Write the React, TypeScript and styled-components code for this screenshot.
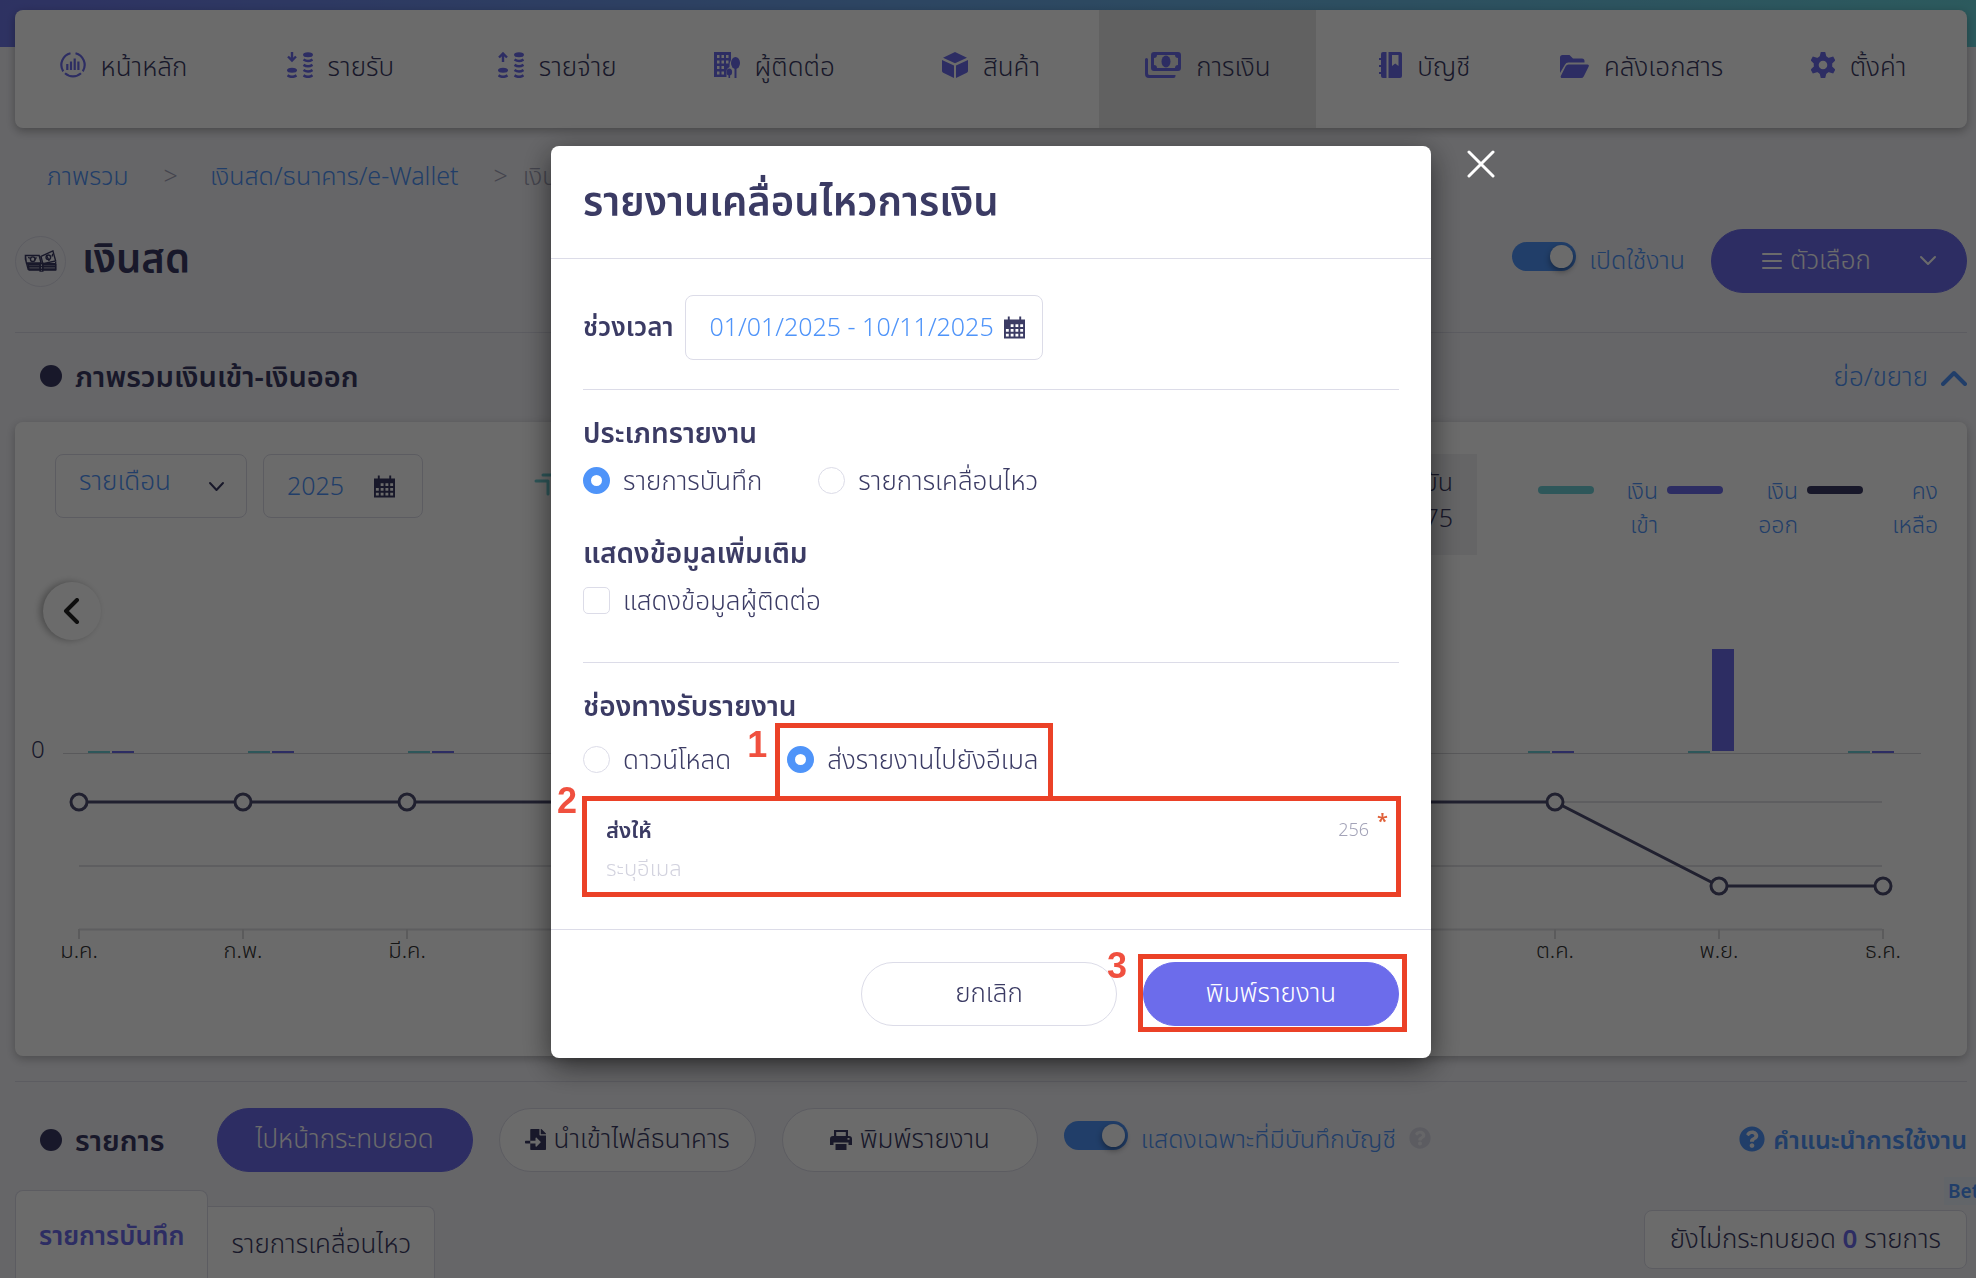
import React from 'react';
import styled, { createGlobalStyle } from 'styled-components';
import { FaFileImport, FaQuestionCircle } from 'react-icons/fa';

const color = {
  ink: '#3b3b64',
  purple: '#6c6ceb',
  blue: '#4f94f9',
  teal: '#6ed0d6',
  line: '#dcdce8',
  page: '#f3f3f8',
  mute: '#a3a3b8',
  mark: '#eb4127',
};

const GlobalStyle = createGlobalStyle`
  * { box-sizing: border-box; }
  body { margin: 0; background: ${color.page}; }
  body, button, input, select {
    font-family: "Noto Sans", "Noto Sans Thai", "Noto Sans Thai UI", sans-serif;
    font-size: 25px;
    font-weight: 350;
    line-height: 40px;
    color: ${color.ink};
  }
  a { text-decoration: none; color: ${color.blue}; }
  h1, h2, h3 { margin: 0; font-weight: 600; }
  svg { display: block; flex: none; }
`;

const Page = styled.div`
  height: 100vh;
  overflow: hidden;
  background: linear-gradient(90deg, #6f78ea, #6ca6ea 45%, #6ad6de) top / 100% 47px no-repeat ${color.page};
  padding: 10px 9px 0 15px;
`;

const Nav = styled.nav`
  display: grid;
  grid-template-columns: repeat(9, 1fr);
  height: 118px;
  background: #fff;
  border-radius: 8px;
  box-shadow: 0 3px 10px rgba(0, 0, 0, 0.3);
`;

const NavLink = styled.a<{ $active?: boolean }>`
  display: flex;
  justify-content: center;
  align-items: flex-start;
  gap: 15px;
  padding-top: 36px;
  font-size: 26px;
  color: ${color.ink};
  background: ${(p) => (p.$active ? '#e7e7e7' : 'transparent')};
  svg { color: ${color.purple}; margin-top: 6px; }
`;

const Crumbs = styled.nav`
  display: flex;
  align-items: center;
  height: 40px;
  margin-top: 27px;
  padding-left: 32px;
  color: ${color.mute};
`;

const CrumbMark = styled.span<{ $tight?: boolean }>`
  padding: 0 ${(p) => (p.$tight ? '15px' : '32px')} 0 35px;
`;

const TitleRow = styled.header`
  display: flex;
  align-items: center;
  height: 64px;
  margin-top: 34px;
`;

const CashBadge = styled.span`
  display: grid;
  place-items: center;
  width: 51px;
  height: 51px;
  border: 1px solid ${color.line};
  border-radius: 50%;
`;

const PageTitle = styled.h1`
  flex: 1;
  margin-left: 16px;
  padding-bottom: 6px;
  font-size: 40px;
  line-height: 56px;
`;

const SwitchLabel = styled.label`
  display: flex;
  align-items: center;
  gap: 13px;
  padding-bottom: 5px;
  color: ${color.blue};
`;

const Switch = styled.input`
  appearance: none;
  width: 64px;
  height: 29px;
  margin: 0 0 5px;
  padding: 3px;
  border-radius: 15px;
  background: ${color.blue};
  &::before {
    content: '';
    display: block;
    width: 23px;
    height: 23px;
    margin-left: auto;
    border-radius: 50%;
    background: #fff;
    box-shadow: 0 3px 6px rgba(0, 0, 0, 0.4);
  }
`;

const Pill = styled.button<{ $solid?: boolean }>`
  display: flex;
  align-items: center;
  justify-content: center;
  gap: 8px;
  min-width: 256px;
  height: 64px;
  padding: 0 25px 5px;
  border: 1px solid ${(p) => (p.$solid ? color.purple : color.line)};
  border-radius: 32px;
  background: ${(p) => (p.$solid ? color.purple : '#fff')};
  color: ${(p) => (p.$solid ? '#fff' : color.ink)};
  font-size: 26px;
  white-space: nowrap;
  svg { margin-top: 4px; }
`;

const OptionsPill = styled(Pill)`
  margin-left: 26px;
  padding-left: 46px;
  svg:last-child { margin-left: 40px; }
`;

const Rule = styled.hr<{ $top?: number }>`
  height: 1px;
  margin: ${(p) => p.$top ?? 0}px 0 0;
  border: 0;
  background: ${color.line};
`;

const SectionHead = styled.div`
  display: flex;
  align-items: center;
  justify-content: space-between;
  height: 89px;
  padding: 0 0 4px 25px;
`;

const SectionTitle = styled.h2`
  display: flex;
  align-items: center;
  gap: 13px;
  font-size: 29px;
  line-height: 40px;
  white-space: nowrap;
  &::before {
    content: '';
    width: 22px;
    height: 22px;
    border-radius: 50%;
    background: ${color.ink};
  }
`;

const Collapse = styled.a`
  display: flex;
  align-items: center;
  gap: 13px;
  font-size: 26px;
  svg { margin-top: 4px; }
`;

const ChartCard = styled.section`
  height: 634px;
  padding-top: 32px;
  border-radius: 8px;
  background: #fff;
  box-shadow: 0 3px 10px rgba(0, 0, 0, 0.25);
`;

const Toolbar = styled.div`
  display: flex;
  align-items: flex-start;
  height: 101px;
  padding: 0 29px 0 40px;
`;

const Box = styled.label<{ $w: number; $end: number }>`
  display: flex;
  align-items: center;
  flex: none;
  width: ${(p) => p.$w}px;
  height: 64px;
  padding: 0 ${(p) => p.$end}px 0 23px;
  margin-right: 16px;
  border: 1px solid ${color.line};
  border-radius: 8px;
  background: #fff;
`;

const PlainSelect = styled.select`
  appearance: none;
  flex: 1;
  min-width: 0;
  padding: 0 0 12px;
  border: 0;
  background: transparent;
  color: ${color.blue};
  font-size: 26px;
`;

const PlainInput = styled.input`
  flex: 1;
  min-width: 0;
  padding: 0 0 3px;
  border: 0;
  outline: 0;
  background: transparent;
  color: ${color.blue};
  &::placeholder { color: #d3d3df; opacity: 1; }
`;

const Summary = styled.div`
  flex: 1;
  display: flex;
  justify-content: space-between;
  padding: 0 61px 0 95px;
  svg { margin-top: 18px; }
`;

const Balance = styled.div`
  width: 300px;
  height: 101px;
  padding: 9px 24px;
  background: #f0f0f3;
  text-align: right;
  line-height: 36px;
`;

const Legend = styled.ul`
  display: grid;
  grid-template-columns: 120px 131px 131px;
  gap: 9px;
  margin: 0;
  padding: 19px 0 0;
  list-style: none;
`;

const LegendItem = styled.li<{ $c: string }>`
  display: flex;
  justify-content: space-between;
  text-align: right;
  font-size: 23px;
  line-height: 34px;
  color: ${color.blue};
  &::before {
    content: '';
    width: 56px;
    height: 8px;
    margin-top: 13px;
    border-radius: 4px;
    background: ${(p) => p.$c};
  }
`;

const ChartArea = styled.div`
  position: relative;
  > svg { width: 100%; height: auto; }
`;

const PrevButton = styled.button`
  position: absolute;
  left: 28px;
  top: 27px;
  display: grid;
  place-items: center;
  width: 58px;
  height: 58px;
  padding: 0 2px 0 0;
  border: 0;
  border-radius: 50%;
  background: #fff;
  box-shadow: -3px 0 7px rgba(0, 0, 0, 0.3);
`;

const ListHead = styled.div`
  display: flex;
  align-items: center;
  height: 64px;
  margin-top: 26px;
  padding-left: 25px;
`;

const ListActions = styled.div`
  display: flex;
  align-items: center;
  gap: 26px;
  margin-left: 52px;
  flex: 1;
`;

const HelpLink = styled.a`
  display: flex;
  align-items: center;
  gap: 8px;
  padding-bottom: 2px;
  font-weight: 600;
`;

const TabsRow = styled.div`
  display: flex;
  align-items: flex-end;
  margin-top: 18px;
  height: 88px;
`;

const Tab = styled.button<{ $active?: boolean }>`
  height: ${(p) => (p.$active ? 88 : 72)}px;
  padding: 0 23px;
  border: 1px solid ${color.line};
  border-bottom: 0;
  border-left-width: ${(p) => (p.$active ? 1 : 0)}px;
  border-radius: ${(p) => (p.$active ? '8px 8px 0 0' : '0 8px 0 0')};
  background: #fff;
  font-size: 26px;
  font-weight: ${(p) => (p.$active ? 600 : 350)};
  color: ${(p) => (p.$active ? color.purple : color.ink)};
`;

const Pending = styled.div`
  position: relative;
  align-self: flex-start;
  margin: 20px 0 0 auto;
  height: 59px;
  padding: 7px 25px;
  border: 1px solid ${color.line};
  border-radius: 8px;
  background: #fff;
  font-size: 26px;
  b { color: ${color.purple}; font-weight: 600; }
`;

const Beta = styled.span`
  position: absolute;
  left: calc(100% - 22px);
  top: -34px;
  padding: 0 4px;
  font-size: 19px;
  line-height: 28px;
  font-weight: 600;
  color: ${color.blue};
  background: #e9f1fb;
`;

/* Modal */

const Backdrop = styled.div`
  position: fixed;
  inset: 0;
  display: flex;
  justify-content: center;
  align-items: flex-start;
  padding: 146px 10px 0 16px;
  background: rgba(0, 0, 0, 0.58);
`;

const Modal = styled.section`
  position: relative;
  width: 880px;
  border-radius: 8px;
  background: #fff;
  box-shadow: 0 8px 30px rgba(0, 0, 0, 0.55);
`;

const Close = styled.button`
  position: absolute;
  left: calc(100% + 36px);
  top: 4px;
  padding: 0;
  border: 0;
  background: none;
  color: #fff;
`;

const ModalHead = styled.header`
  padding: 27px 32px 29px;
  border-bottom: 1px solid ${color.line};
`;

const ModalTitle = styled.h2`
  font-size: 40px;
  line-height: 56px;
`;

const ModalBody = styled.form`
  padding: 36px 32px 33px;
`;

const Period = styled.div`
  display: flex;
  align-items: center;
  gap: 11px;
  margin-bottom: 29px;
  > label {
    padding-bottom: 3px;
    font-size: 26px;
    font-weight: 600;
    white-space: nowrap;
  }
`;

const DateBox = styled.div`
  display: flex;
  align-items: center;
  width: 358px;
  height: 65px;
  padding: 0 17px 0 24px;
  border: 1px solid ${color.line};
  border-radius: 8px;
`;

const Group = styled.div<{ $top: number; $gap: number }>`
  display: flex;
  flex-direction: column;
  gap: ${(p) => p.$gap}px;
  padding-top: ${(p) => p.$top}px;
`;

const GroupTitle = styled.h3`
  font-size: 28px;
  line-height: 40px;
`;

const Choices = styled.div`
  display: flex;
  gap: 56px;
`;

const Choice = styled.label`
  position: relative;
  display: flex;
  align-items: center;
  gap: 13px;
  font-size: 26px;
  white-space: nowrap;
`;

const Radio = styled.input`
  appearance: none;
  width: 27px;
  height: 27px;
  margin: 0;
  border: 1px solid ${color.line};
  border-radius: 50%;
  background: #fff;
  &:checked { border: 8px solid ${color.blue}; }
`;

const Check = styled(Radio)`
  border-radius: 5px;
`;

const Field = styled.div`
  position: relative;
  height: 99px;
  margin-top: 18px;
  padding: 14px 23px 0;
`;

const FieldTop = styled.div`
  display: flex;
  justify-content: space-between;
  line-height: 36px;
  label { font-size: 22px; font-weight: 600; }
  span { font-size: 18px; color: ${color.mute}; padding-right: 7px; }
`;

const Star = styled.i`
  position: absolute;
  right: 11px;
  top: 10px;
  font-size: 20px;
  line-height: 28px;
  font-style: normal;
  font-weight: 600;
  color: #e0613a;
`;

const EmailInput = styled(PlainInput)`
  display: block;
  width: 100%;
  font-size: 22px;
`;

const ModalFoot = styled.footer`
  display: flex;
  justify-content: flex-end;
  gap: 26px;
  padding: 32px;
  border-top: 1px solid ${color.line};
`;

const Anchor = styled.div`
  position: relative;
`;

const Frame = styled.span<{ $inset: string }>`
  position: absolute;
  inset: ${(p) => p.$inset};
  border: 5px solid ${color.mark};
  pointer-events: none;
`;

const Step = styled.span<{ $x: number; $y: number }>`
  position: absolute;
  left: ${(p) => p.$x}px;
  top: ${(p) => p.$y}px;
  font-family: "Liberation Sans", Arial, sans-serif;
  font-size: 36px;
  line-height: 40px;
  font-weight: 700;
  color: #f0503f;
`;

/* Icons */

const HomeIcon = () => (
  <svg width="26" height="26" viewBox="0 0 26 26" fill="none" stroke="currentColor" strokeWidth="2.2">
    <path d="M10.500 1.300A12 12 0 0 0 3.200 19.300M15.500 1.300a12 12 0 0 1 7.300 18M5 21.300a12 12 0 0 0 16 0" />
    <path d="M7.300 18v-6M11 18V9.500M14.700 18V6.500M18.400 18V9.500" />
  </svg>
);

const CoinsIcon = ({ up }: { up?: boolean }) => (
  <svg width="26" height="26" viewBox="0 0 26 26" fill="none" stroke="currentColor">
    <path strokeWidth="2.400" d={up ? 'M5 10V2M1 5.500l4-4 4 4' : 'M5 0v8M1 4.500l4 4 4-4'} />
    <g fill="currentColor" stroke="none">
      <ellipse cx="21" cy="2.800" rx="5" ry="2.500" />
      <ellipse cx="5" cy="18.300" rx="5" ry="2.500" />
    </g>
    <path
      strokeWidth="2.600"
      d="M16.500 7.500q4.500 3 9 0M16.500 12.800q4.500 3 9 0M16.500 18q4.500 3 9 0M16.500 23.300q4.500 3 9 0M.5 23.300q4.500 3 9 0"
    />
  </svg>
);

const ContactIcon = () => (
  <svg width="26" height="26" viewBox="0 0 26 26" fill="currentColor">
    <path
      fillRule="evenodd"
      d="M0 0h17v8q-2 3-1.500 7-4 2-3 7v3H0zM3 3v3h2.500V3zm4.500 0v3H10V3zM12 3v3h2.500V3zM3 8.500v3h2.500v-3zm4.500 0v3H10v-3zm4.500 0v3h2.500v-3zM3 14v3h2.500v-3zm4.500 0v3H10v-3zM3 19.500v3h2.500v-3zm4.500 0v3H10v-3z"
    />
    <ellipse cx="21.500" cy="11" rx="4.500" ry="6" />
    <path d="M20.500 15h2v11h-2zM14.500 21h1.600v5h-1.600z" />
    <ellipse cx="15.300" cy="20" rx="2.800" ry="3.500" />
  </svg>
);

const CubeIcon = () => (
  <svg width="26" height="26" viewBox="0 0 26 26" fill="currentColor">
    <path d="M13 0l12 5.800-12 5.400L1 5.800zM0 8l12 5.400V26L1.200 20.800A2 2 0 0 1 0 19zM26 8l-12 5.400V26l10.800-5.200A2 2 0 0 0 26 19z" />
  </svg>
);

const MoneyIcon = () => (
  <svg width="36" height="26" viewBox="0 0 36 26" fill="currentColor">
    <path
      fillRule="evenodd"
      d="M9 0h24a3 3 0 0 1 3 3v13a3 3 0 0 1-3 3H9a3 3 0 0 1-3-3V3a3 3 0 0 1 3-3zm3 3a3 3 0 0 1-3 3v7a3 3 0 0 1 3 3h18a3 3 0 0 1 3-3V6a3 3 0 0 1-3-3z"
    />
    <ellipse cx="21" cy="9.500" rx="4.500" ry="6" />
    <path d="M1.500 6a1.500 1.500 0 0 1 1.500 1.500V21a1.800 1.800 0 0 0 2 2h25.500v1a2 2 0 0 1-2 2H4a4 4 0 0 1-4-4V7.500A1.500 1.500 0 0 1 1.500 6z" />
  </svg>
);

const BookIcon = () => (
  <svg width="23" height="26" viewBox="0 0 23 26" fill="currentColor">
    <path d="M4 0h3.500v26H4a2 2 0 0 1-2-2v-2H0v-2h2v-5H0v-2h2V8H0V6h2V2a2 2 0 0 1 2-2z" />
    <path fillRule="evenodd" d="M9.500 0H21a2 2 0 0 1 2 2v22a2 2 0 0 1-2 2H9.500zM13 3v11l3.200-2.500L19.500 14V3z" />
  </svg>
);

const FolderIcon = () => (
  <svg width="29" height="26" viewBox="0 0 29 26" fill="currentColor">
    <path d="M0 21V5.500A2.500 2.500 0 0 1 2.500 3h7l3.500 3.500h9A2.500 2.500 0 0 1 24.500 9v1.500H8.500a4 4 0 0 0-3.600 2.200z" />
    <path d="M8.500 12.500h19a1.300 1.300 0 0 1 1.200 1.900l-5 10a3 3 0 0 1-2.700 1.600H2a1.300 1.300 0 0 1-1.200-1.900l5-10a3 3 0 0 1 2.700-1.600z" />
  </svg>
);

const GearIcon = () => (
  <svg width="24" height="26" viewBox="0 0 24 26">
    <circle cx="12" cy="13" r="6.800" fill="none" stroke="currentColor" strokeWidth="5" />
    {[0, 60, 120].map((a) => (
      <path
        key={a}
        transform={`rotate(${a} 12 13)`}
        fill="currentColor"
        d="M9.800 0h4.400l1.300 5h-7zM9.800 26h4.400l1.300-5h-7z"
      />
    ))}
  </svg>
);

const PrinterIcon = () => (
  <svg width="22" height="20" viewBox="0 0 22 20" fill="currentColor">
    <path fillRule="evenodd" d="M4 0h14v7H4zM6.200 2v4h9.600V2z" />
    <path fillRule="evenodd" d="M3 6h16a3 3 0 0 1 3 3v6h-3.500v-2.500h-15V15H0V9a3 3 0 0 1 3-3zm14.500 2v1.800h2V8z" />
    <path d="M5.500 14h11v6h-11z" />
  </svg>
);

const CalendarIcon = () => (
  <svg width="21" height="23" viewBox="0 0 22 23">
    <path fill={color.ink} d="M0 3h22v20H0zM4 0h2v3H4zM16 0h2v3h-2z" />
    <path
      fill="#fff"
      d="M7 8h3v3H7zm5 0h3v3h-3zm5 0h3v3h-3zM2 13h3v3H2zm5 0h3v3H7zm5 0h3v3h-3zm5 0h3v3h-3zM2 18h3v3H2zm5 0h3v3H7zm5 0h3v3h-3zm5 0h3v3h-3z"
    />
  </svg>
);

const CashIcon = () => (
  <svg width="36" height="22" viewBox="0 0 36 24" fill="none" stroke={color.ink} strokeWidth="1.500">
    <path d="M1 6h15l2 8H2zM18 7l13-6 3 11-14 3zM1 6v4l3 11h30v-8M3 15h31M3.500 18h31" />
    <path d="M17 14v9h3v-9M4 8l2 1M13 8l-2 3M24 6l3 6M31 4l-1 3" />
    <circle cx="9" cy="10" r="2.500" />
    <circle cx="26" cy="8" r="2.500" />
    <path fill={color.ink} fillOpacity="0.5" d="M4 16h13v6H5zM20 16h14v6H20z" />
  </svg>
);

type StrokeProps = { w: number; h: number; d: string; sw: number; c?: string };
const Stroke = ({ w, h, d, sw, c = 'currentColor' }: StrokeProps) => (
  <svg width={w} height={h} viewBox={`0 0 ${w} ${h}`} fill="none" stroke={c} strokeWidth={sw} strokeLinecap="round" strokeLinejoin="round">
    <path d={d} />
  </svg>
);

const navItems: { label: string; icon: React.ReactNode; active?: boolean }[] = [
  { label: 'หน้าหลัก', icon: <HomeIcon /> },
  { label: 'รายรับ', icon: <CoinsIcon /> },
  { label: 'รายจ่าย', icon: <CoinsIcon up /> },
  { label: 'ผู้ติดต่อ', icon: <ContactIcon /> },
  { label: 'สินค้า', icon: <CubeIcon /> },
  { label: 'การเงิน', icon: <MoneyIcon />, active: true },
  { label: 'บัญชี', icon: <BookIcon /> },
  { label: 'คลังเอกสาร', icon: <FolderIcon /> },
  { label: 'ตั้งค่า', icon: <GearIcon /> },
];

const months = ['ม.ค.', 'ก.พ.', 'มี.ค.', 'เม.ย.', 'พ.ค.', 'มิ.ย.', 'ก.ค.', 'ส.ค.', 'ก.ย.', 'ต.ค.', 'พ.ย.', 'ธ.ค.'];
const balanceY = [247, 247, 247, 247, 247, 247, 247, 247, 247, 247, 331, 331];
const monthX = (i: number) => 64 + i * 164;

const Chart = () => (
  <svg viewBox="0 0 1952 469">
    <path d="M48 198.500H1906" stroke="#d4d4d8" />
    {months.map((m, i) => (
      <g key={m}>
        <rect x={73 + i * 160} y="196" width="22" height="2" fill={color.teal} />
        <rect x={97 + i * 160} y={i === 10 ? 94 : 196} width="22" height={i === 10 ? 102 : 2} fill={color.purple} />
      </g>
    ))}
    <path d="M64 247H1867M64 311H1867M64 374.500H1867" stroke="#e0e0e4" strokeWidth="2" />
    <path d={months.map((_, i) => `M${monthX(i)} 374v10`).join('')} stroke="#d8d8dc" strokeWidth="2" />
    <polyline
      points={balanceY.map((y, i) => `${monthX(i)},${y}`).join(' ')}
      fill="none"
      stroke="#4c4c70"
      strokeWidth="3"
    />
    {balanceY.map((y, i) => (
      <circle key={i} cx={monthX(i)} cy={y} r="8" fill="#fff" stroke="#4c4c70" strokeWidth="3" />
    ))}
    <g fontSize="22" fill="#333" textAnchor="middle">
      {months.map((m, i) => (
        <text key={m} x={monthX(i)} y="403">{m}</text>
      ))}
    </g>
    <text x="16" y="203" fontSize="24" fill={color.ink}>0</text>
  </svg>
);

export default function App() {
  return (
    <>
      <GlobalStyle />
      <Page>
        <Nav>
          {navItems.map((n) => (
            <NavLink key={n.label} href="#" $active={n.active}>
              {n.icon}
              {n.label}
            </NavLink>
          ))}
        </Nav>

        <Crumbs>
          <a href="#">ภาพรวม</a>
          <CrumbMark>&gt;</CrumbMark>
          <a href="#">เงินสด/ธนาคาร/e-Wallet</a>
          <CrumbMark $tight>&gt;</CrumbMark>
          <span>เงินสด</span>
        </Crumbs>

        <TitleRow>
          <CashBadge><CashIcon /></CashBadge>
          <PageTitle>เงินสด</PageTitle>
          <SwitchLabel>
            <Switch type="checkbox" role="switch" defaultChecked />
            เปิดใช้งาน
          </SwitchLabel>
          <OptionsPill $solid>
            <Stroke w={20} h={18} sw={2} d="M1 2h18M1 9h18M1 16h18" />
            ตัวเลือก
            <Stroke w={18} h={11} sw={2} d="M2 2l7 7 7-7" />
          </OptionsPill>
        </TitleRow>

        <Rule $top={39} />

        <SectionHead>
          <SectionTitle>ภาพรวมเงินเข้า-เงินออก</SectionTitle>
          <Collapse href="#">
            ย่อ/ขยาย
            <Stroke w={26} h={16} sw={4} d="M2 14L13 3l11 11" />
          </Collapse>
        </SectionHead>

        <ChartCard>
          <Toolbar>
            <Box $w={192} $end={21}>
              <PlainSelect aria-label="ช่วง" defaultValue="m">
                <option value="m">รายเดือน</option>
              </PlainSelect>
              <Stroke w={17} h={11} sw={2} d="M2 2l6.500 7L15 2" />
            </Box>
            <Box $w={160} $end={27}>
              <PlainInput aria-label="ปี" defaultValue="2025" />
              <CalendarIcon />
            </Box>
            <Summary>
              <Stroke w={40} h={26} sw={3} c={color.teal} d="M2 9h12v13M9 3h29v10" />
              <Balance>
                <div>ยอดปัจจุบัน</div>
                <div>12,475</div>
              </Balance>
            </Summary>
            <Legend>
              <LegendItem $c={color.teal}><span>เงิน<br />เข้า</span></LegendItem>
              <LegendItem $c={color.purple}><span>เงิน<br />ออก</span></LegendItem>
              <LegendItem $c={color.ink}><span>คง<br />เหลือ</span></LegendItem>
            </Legend>
          </Toolbar>
          <ChartArea>
            <Chart />
            <PrevButton aria-label="ก่อนหน้า">
              <Stroke w={17} h={26} sw={4} c="#222" d="M14 2L3 13l11 11" />
            </PrevButton>
          </ChartArea>
        </ChartCard>

        <Rule $top={25} />

        <ListHead>
          <SectionTitle>รายการ</SectionTitle>
          <ListActions>
            <Pill $solid>ไปหน้ากระทบยอด</Pill>
            <Pill><FaFileImport size={21} />นำเข้าไฟล์ธนาคาร</Pill>
            <Pill><PrinterIcon />พิมพ์รายงาน</Pill>
            <SwitchLabel>
              <Switch type="checkbox" role="switch" defaultChecked />
              แสดงเฉพาะที่มีบันทึกบัญชี
              <FaQuestionCircle size={22} color={color.line} />
            </SwitchLabel>
          </ListActions>
          <HelpLink href="#"><FaQuestionCircle size={26} />คำแนะนำการใช้งาน</HelpLink>
        </ListHead>

        <TabsRow>
          <Tab $active>รายการบันทึก</Tab>
          <Tab>รายการเคลื่อนไหว</Tab>
          <Pending>
            ยังไม่กระทบยอด <b>0</b> รายการ
            <Beta>Beta</Beta>
          </Pending>
        </TabsRow>
      </Page>

      <Backdrop>
        <Modal role="dialog" aria-labelledby="report-title">
          <Close aria-label="ปิด">
            <Stroke w={28} h={28} sw={3} d="M2 2l24 24M26 2L2 26" />
          </Close>
          <ModalHead>
            <ModalTitle id="report-title">รายงานเคลื่อนไหวการเงิน</ModalTitle>
          </ModalHead>
          <ModalBody>
            <Period>
              <label htmlFor="period">ช่วงเวลา</label>
              <DateBox>
                <PlainInput id="period" defaultValue="01/01/2025 - 10/11/2025" />
                <CalendarIcon />
              </DateBox>
            </Period>
            <Rule />
            <Group role="radiogroup" $top={22} $gap={8}>
              <GroupTitle>ประเภทรายงาน</GroupTitle>
              <Choices>
                <Choice><Radio type="radio" name="kind" defaultChecked />รายการบันทึก</Choice>
                <Choice><Radio type="radio" name="kind" />รายการเคลื่อนไหว</Choice>
              </Choices>
            </Group>
            <Group role="group" $top={32} $gap={8}>
              <GroupTitle>แสดงข้อมูลเพิ่มเติม</GroupTitle>
              <Choices>
                <Choice><Check type="checkbox" />แสดงข้อมูลผู้ติดต่อ</Choice>
              </Choices>
            </Group>
            <Rule $top={42} />
            <Group role="radiogroup" $top={22} $gap={14}>
              <GroupTitle>ช่องทางรับรายงาน</GroupTitle>
              <Choices>
                <Choice><Radio type="radio" name="via" />ดาวน์โหลด</Choice>
                <Choice>
                  <Radio type="radio" name="via" defaultChecked />
                  ส่งรายงานไปยังอีเมล
                  <Frame $inset="-16px -14px -22px -12px" />
                  <Step $x={-40} $y={-14}>1</Step>
                </Choice>
              </Choices>
            </Group>
            <Field>
              <FieldTop>
                <label htmlFor="email">ส่งให้</label>
                <span>256</span>
              </FieldTop>
              <Star>*</Star>
              <EmailInput id="email" placeholder="ระบุอีเมล" />
              <Frame $inset="-1px -2px -1px -1px" />
              <Step $x={-26} $y={-16}>2</Step>
            </Field>
          </ModalBody>
          <ModalFoot>
            <Pill>ยกเลิก</Pill>
            <Anchor>
              <Pill $solid>พิมพ์รายงาน</Pill>
              <Frame $inset="-8px -8px -6px -5px" />
              <Step $x={-36} $y={-16}>3</Step>
            </Anchor>
          </ModalFoot>
        </Modal>
      </Backdrop>
    </>
  );
}
